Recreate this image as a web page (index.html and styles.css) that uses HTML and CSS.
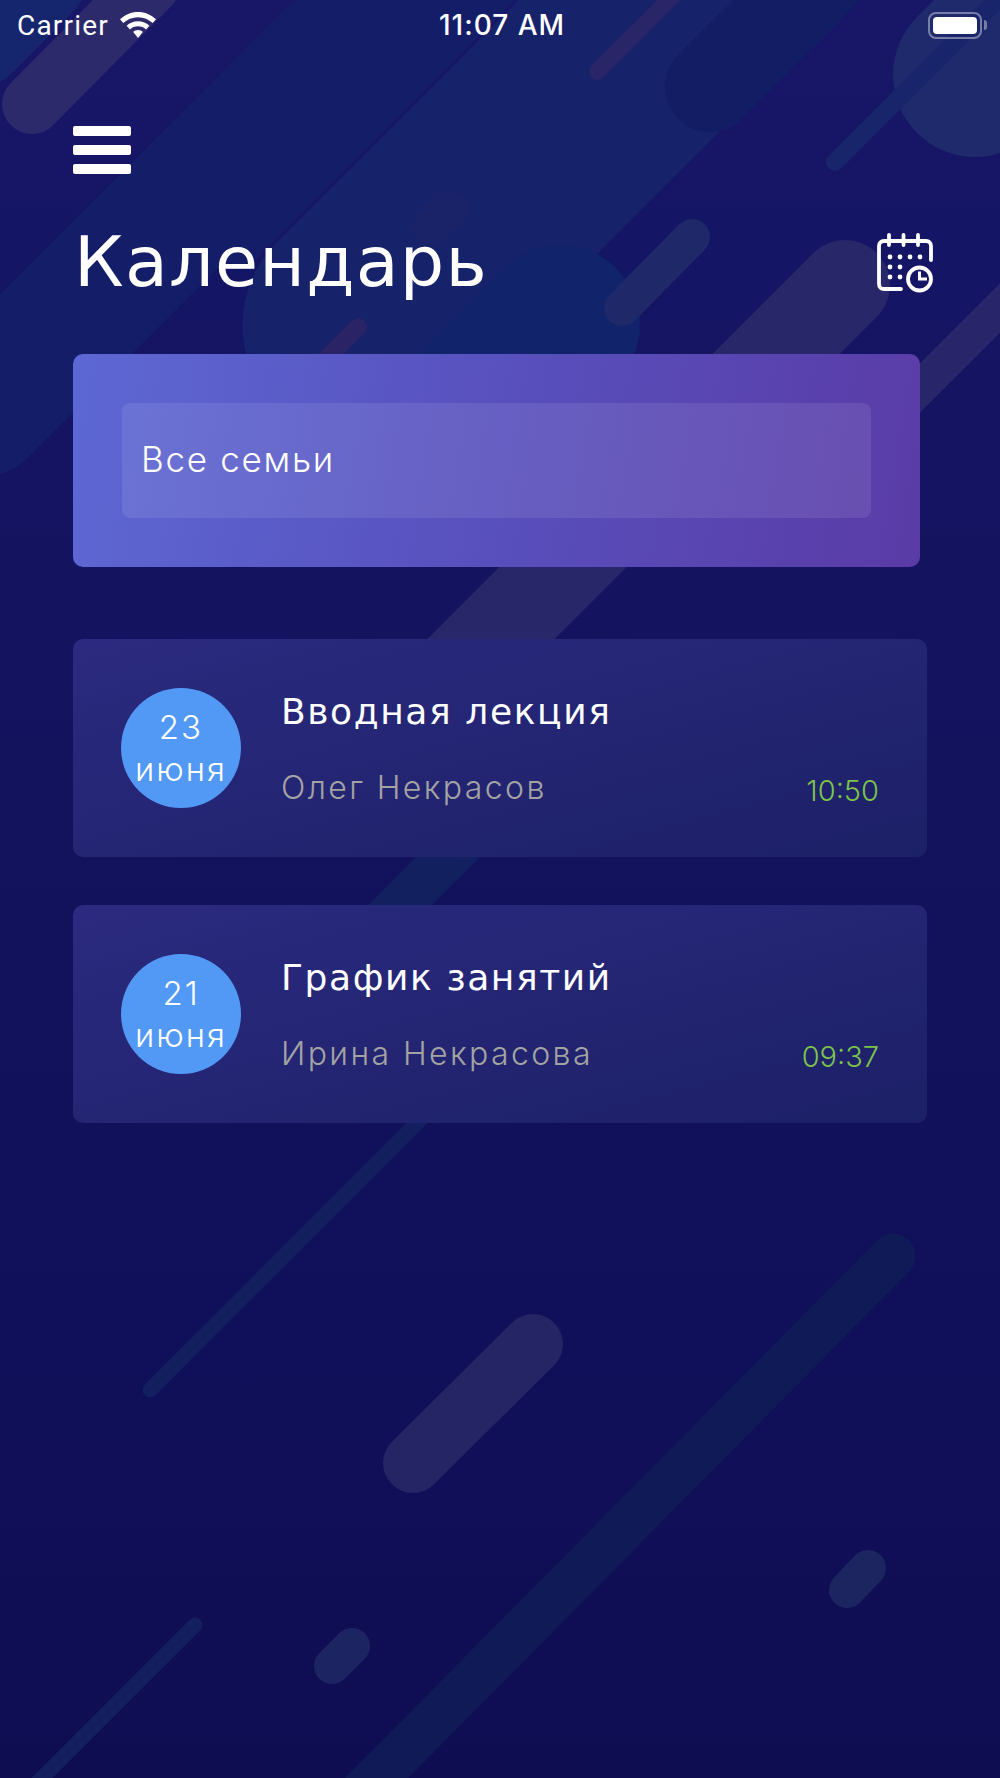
FILE: index.html
```html
<!DOCTYPE html>
<html lang="ru">
<head>
<meta charset="utf-8">
<title>Календарь</title>
<link rel="stylesheet" href="styles.css">
</head>
<body>
<div class="app">
  <svg class="backdrop" viewBox="0 0 1000 1778" width="1000" height="1778" aria-hidden="true">
    <g fill="none" stroke-linecap="round">
      <line x1="-30" y1="30" x2="30" y2="-30" stroke="#15256e" stroke-width="120"/>
      <line x1="-20" y1="410" x2="420" y2="-30" stroke="#141e68" stroke-width="135"/>
      <line x1="240" y1="240" x2="500" y2="-20" stroke="#141e68" stroke-width="50"/>
      <line x1="360" y1="325" x2="720" y2="-35" stroke="#162269" stroke-width="235"/>
      <line x1="710" y1="87" x2="840" y2="-43" stroke="#131d64" stroke-width="90"/>
      <line x1="32" y1="104" x2="150" y2="-15" stroke="#2c2a6a" stroke-width="60"/>
      <line x1="597" y1="72" x2="680" y2="-11" stroke="#2a2568" stroke-width="16"/>
      <line x1="432" y1="226" x2="450" y2="210" stroke="#1a2368" stroke-width="38"/>
      <line x1="358" y1="327" x2="300" y2="385" stroke="#2a2366" stroke-width="18"/>
      <line x1="560" y1="325" x2="470" y2="415" stroke="#10236b" stroke-width="160"/>
      <line x1="622" y1="308" x2="692" y2="237" stroke="#1f2868" stroke-width="36"/>
      <line x1="845" y1="285" x2="430" y2="700" stroke="#27276a" stroke-width="90"/>
      <line x1="975" y1="75" x2="1060" y2="-10" stroke="#1f2a6c" stroke-width="164"/>
      <line x1="835" y1="162" x2="1010" y2="-13" stroke="#19256b" stroke-width="18"/>
      <line x1="880" y1="428" x2="1020" y2="288" stroke="#28256a" stroke-width="35"/>
      <line x1="550" y1="755" x2="370" y2="935" stroke="#13205f" stroke-width="45"/>
      <line x1="150" y1="1390" x2="500" y2="1040" stroke="#131f5e" stroke-width="15"/>
      <line x1="533" y1="1344" x2="413" y2="1463" stroke="#252464" stroke-width="60"/>
      <line x1="893" y1="1256" x2="340" y2="1815" stroke="#0f1a56" stroke-width="45"/>
      <line x1="868" y1="1568" x2="847" y2="1590" stroke="#1c2560" stroke-width="36"/>
      <line x1="352" y1="1646" x2="332" y2="1666" stroke="#1c2562" stroke-width="36"/>
      <line x1="195" y1="1625" x2="30" y2="1790" stroke="#131f5e" stroke-width="15"/>
    </g>
  </svg>

  <header class="status">
    <div class="status-left">
      <span>Carrier</span>
      <svg class="wifi" viewBox="0 0 36 26" width="36" height="26" aria-hidden="true">
        <path fill="#fff" d="M18 0C11 0 5 2.700 0 7.300L3.300 11C7.200 7.400 12.300 5.200 18 5.200S28.800 7.400 32.700 11L36 7.300C31 2.700 25 0 18 0Z"/>
        <path fill="#fff" d="M18 9.200C13.600 9.200 9.600 10.900 6.600 13.700L10 17.400C12.100 15.500 14.900 14.300 18 14.300S23.900 15.500 26 17.400L29.400 13.700C26.400 10.900 22.400 9.200 18 9.200Z"/>
        <path fill="#fff" d="M18 18C16.100 18 14.400 18.700 13.200 19.900L18 26L22.800 19.900C21.600 18.700 19.900 18 18 18Z"/>
      </svg>
    </div>
    <div class="status-time">11:07 AM</div>
    <div class="status-right">
      <div class="battery"><div class="battery-level"></div></div>
      <div class="battery-nub"></div>
    </div>
  </header>

  <main class="content">
    <div class="menu" aria-label="Меню">
      <span class="menu-bar"></span>
      <span class="menu-bar"></span>
      <span class="menu-bar"></span>
    </div>

    <div class="title-row">
      <h1 class="title">Календарь</h1>
      <svg class="calendar-icon" viewBox="0 0 58 61" width="58" height="61" aria-hidden="true">
        <g fill="none" stroke="#fff" stroke-width="3.800" stroke-linecap="round" stroke-linejoin="round">
          <path d="M25 57H8C5 57 3 55 3 52V14C3 11 5 9 8 9H50C53 9 55 11 55 14V28"/>
          <path d="M13 3V13M27.500 3V13M42 3V13"/>
          <circle cx="43.500" cy="47" r="11.500"/>
        </g>
        <path fill="#fff" d="M42 39.500H45V45.500H51V48.500H42Z"/>
        <g fill="#fff">
          <circle cx="14" cy="25" r="2.400"/><circle cx="24" cy="25" r="2.400"/><circle cx="34" cy="25" r="2.400"/><circle cx="44" cy="25" r="2.400"/>
          <circle cx="14" cy="35" r="2.400"/><circle cx="24" cy="35" r="2.400"/>
          <circle cx="14" cy="45" r="2.400"/><circle cx="24" cy="45" r="2.400"/>
        </g>
      </svg>
    </div>

    <section class="filter">
      <div class="filter-field">Все семьи</div>
    </section>

    <section class="events">
      <article class="event">
        <div class="date"><span>23</span><span>июня</span></div>
        <div class="event-body">
          <div class="event-title">Вводная лекция</div>
          <div class="event-meta">
            <span class="event-author">Олег Некрасов</span>
            <span class="event-time">10:50</span>
          </div>
        </div>
      </article>
      <article class="event">
        <div class="date"><span>21</span><span>июня</span></div>
        <div class="event-body">
          <div class="event-title">График занятий</div>
          <div class="event-meta">
            <span class="event-author">Ирина Некрасова</span>
            <span class="event-time">09:37</span>
          </div>
        </div>
      </article>
    </section>
  </main>
</div>
</body>
</html>
```

FILE: styles.css
```css
* {
  box-sizing: border-box;
}

html,
body {
  margin: 0;
  padding: 0;
}

body {
  background: #0f0d50;
  font-family: Inter, "Noto Sans", "Liberation Sans", sans-serif;
  color: #fff;
}

.app {
  position: relative;
  width: 1000px;
  height: 1778px;
  overflow: hidden;
  background: linear-gradient(180deg, #181667 0%, #151565 15%, #12125c 50%, #10105a 75%, #0f0d52 100%);
}

.backdrop {
  position: absolute;
  inset: 0;
}

.status,
.content {
  position: relative;
}

.status {
  display: grid;
  grid-template-columns: 1fr auto 1fr;
  align-items: center;
  height: 50px;
  padding: 0 13px 0 17px;
  font-size: 27px;
}

.status-left {
  display: flex;
  align-items: center;
  gap: 11px;
  font-family: Roboto, sans-serif;
  font-size: 28px;
  letter-spacing: 1.2px;
}

.wifi {
  margin-top: -1px;
}

.status-time {
  font-family: Inter, sans-serif;
  font-weight: 500;
  font-size: 28px;
  letter-spacing: 1px;
}

.status-right {
  display: flex;
  justify-content: flex-end;
  align-items: center;
  gap: 2px;
}

.battery {
  width: 54px;
  height: 27px;
  padding: 3px;
  border: 2px solid rgba(255, 255, 255, 0.4);
  border-radius: 8px;
}

.battery-level {
  height: 100%;
  border-radius: 4px;
  background: #fff;
}

.battery-nub {
  width: 3px;
  height: 10px;
  border-radius: 0 3px 3px 0;
  background: rgba(255, 255, 255, 0.4);
}

.content {
  padding: 76px 73px 0;
}

.menu {
  display: flex;
  flex-direction: column;
  gap: 9px;
  width: 58px;
}

.menu-bar {
  height: 10px;
  border-radius: 2px;
  background: #fff;
}

.title-row {
  display: flex;
  justify-content: space-between;
  align-items: center;
  height: 72px;
  margin-top: 52px;
  margin-right: -7px;
}

.title {
  margin: 0;
  padding-left: 1px;
  font-family: "DejaVu Sans", Inter, sans-serif;
  font-size: 70px;
  font-weight: 400;
  line-height: 72px;
  letter-spacing: 1.2px;
}

.filter {
  margin: 56px 7px 0 0;
  padding: 49px;
  height: 213px;
  border-radius: 10px;
  background: linear-gradient(100deg, #5d68d4 0%, #5850bd 50%, #5a3ba6 100%);
}

.filter-field {
  display: flex;
  align-items: center;
  height: 115px;
  padding: 0 0 4px 19px;
  border-radius: 8px;
  background: rgba(255, 255, 255, 0.09);
  font-size: 35px;
  font-weight: 300;
  letter-spacing: 1.7px;
}

.events {
  display: flex;
  flex-direction: column;
  gap: 48px;
  margin-top: 72px;
}

.event {
  display: flex;
  gap: 40px;
  height: 218px;
  padding: 49px 48px;
  border-radius: 10px;
  background: linear-gradient(165deg, #2b2a80 0%, #1c2066 100%);
}

.date {
  display: flex;
  flex: none;
  flex-direction: column;
  align-items: center;
  justify-content: center;
  width: 120px;
  height: 120px;
  padding-bottom: 1px;
  border-radius: 50%;
  background: #5299f5;
  font-size: 33px;
  font-weight: 300;
  line-height: 42px;
  letter-spacing: 2px;
}

.event-body {
  display: flex;
  flex: 1;
  flex-direction: column;
  gap: 28px;
}

.event-title {
  font-family: "DejaVu Sans", Inter, sans-serif;
  font-size: 36px;
  font-weight: 400;
  line-height: 48px;
  letter-spacing: 1.6px;
}

.event-meta {
  display: flex;
  justify-content: space-between;
  align-items: flex-start;
  line-height: 48px;
}

.event-author {
  font-size: 32px;
  font-weight: 300;
  letter-spacing: 2.4px;
  color: #a3a3a3;
}

.event-time {
  margin-top: 3px;
  font-size: 29px;
  font-weight: 300;
  color: #7cc24a;
}
```
